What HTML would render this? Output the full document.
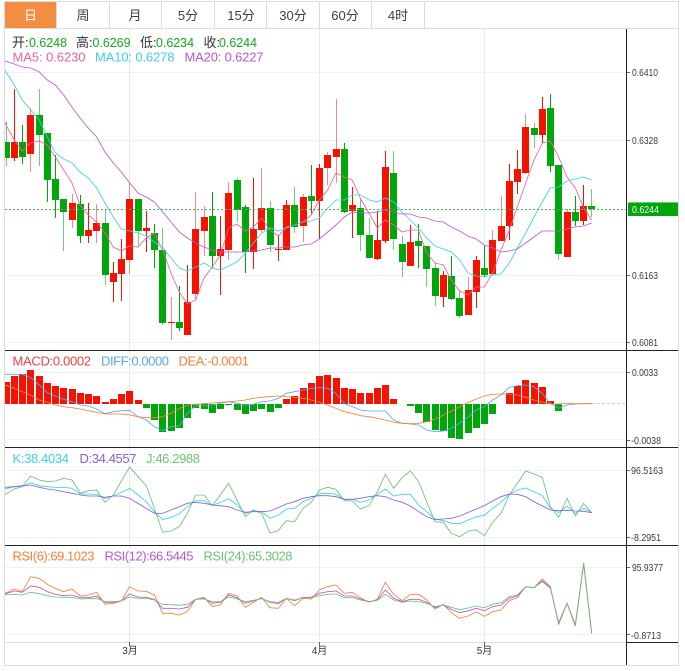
<!DOCTYPE html>
<html lang="zh"><head><meta charset="utf-8"><title>K线图</title>
<style>
html,body{margin:0;padding:0;background:#fff;width:685px;height:671px;overflow:hidden}
svg{display:block}
text{font-family:"Liberation Sans","Noto Sans CJK SC",sans-serif}
.tab{font-size:13px;fill:#3d3d3d;text-anchor:middle}
.hd{font-size:13px}
.ax{font-size:10px;fill:#3a3a3a}
.mo{font-size:10px;fill:#333;text-anchor:middle}
.c{shape-rendering:crispEdges;fill:none}
polyline{fill:none;stroke-width:.85;vector-effect:non-scaling-stroke}
.cy{stroke:#3fd0e0}.pk{stroke:#f0609a}.pu{stroke:#b45ad0}.bl{stroke:#58a8ee}.or{stroke:#f5803a}.vi{stroke:#8a5fd0}.gr{stroke:#6fc077}
</style></head><body>
<svg width="685" height="671" viewBox="0 0 685 671" xmlns="http://www.w3.org/2000/svg">
<defs><clipPath id="cl"><rect x="5" y="29" width="621" height="613"/></clipPath></defs>

<!-- grid -->
<path class="c" stroke="#eef2f5" d="M5 72.5H626M5 140.5H626M5 275.5H626M5 342.5H626M5 372.5H626M5 439.5H626M5 470.5H626M5 537.5H626M5 567.5H626M5 634.5H626"/>
<path class="c" stroke="#e4ebf1" d="M129.5 29V642M319.5 29V642M484.5 29V642"/>

<!-- tabs -->
<rect x="5" y="2" width="51" height="26" fill="#f38d42"/>
<path class="c" stroke="#dcdcdc" d="M56.5 2V28M109.5 2V28M161.5 2V28M214.5 2V28M266.5 2V28M319.5 2V28M371.5 2V28M424.5 2V28M5 28.5H678"/>
<text class="tab" x="30.5" y="20" style="fill:#fff">日</text>
<text class="tab" x="83" y="20">周</text>
<text class="tab" x="135" y="20">月</text>
<text class="tab" x="188" y="20">5分</text>
<text class="tab" x="241" y="20">15分</text>
<text class="tab" x="293" y="20">30分</text>
<text class="tab" x="345" y="20">60分</text>
<text class="tab" x="398" y="20">4时</text>

<g clip-path="url(#cl)">
<!-- wicks -->
<path class="c" stroke="#f51200" d="M14.5 89V161M88.5 203V243M113.5 262V302M121.5 239V301M146.5 211V252M187.5 265V335M220.5 216V295M253.5 178V269M278.5 235V261M286.5 200V250M319.5 164V239M352.5 187V238M377.5 211V260M385.5 151V243M410.5 225V266M443.5 271V307M476.5 256V308M509.5 164V240M517.5 150V194M542.5 97V143M583.5 185V225"/>
<path class="c" stroke="#fb8a80" d="M30.5 108V172M72.5 194V228M96.5 204V243M129.5 183V274M171.5 297V340M195.5 192V300M204.5 206V256M228.5 182V260M261.5 168V232M303.5 194V242M327.5 152V185M336.5 99V183M468.5 277V315M492.5 230V275M501.5 196V241M525.5 114V174M567.5 209V257"/>
<path class="c" stroke="#00a60a" d="M22.5 125V164M47.5 133V202M55.5 155V218M80.5 195V243M154.5 224V268M179.5 286V331M212.5 192V268M245.5 205V273M311.5 165V214M344.5 143V213M418.5 224V268M451.5 256V300M484.5 246V277M550.5 94V172M575.5 196V226"/>
<path class="c" stroke="#70cf75" d="M6.5 122V166M39.5 89V166M63.5 199V251M105.5 209V285M138.5 199V247M162.5 228V325M237.5 178V222M270.5 201V252M294.5 187V233M360.5 199V251M369.5 218V258M393.5 151V250M402.5 236V277M426.5 246V287M435.5 263V306M459.5 290V318M534.5 123V148M558.5 165V260M591.5 189V217"/>
<!-- bodies -->
<path class="c" stroke="#f51200" stroke-width="7" d="M14.5 142V158M30.5 115V154M72.5 203V220M88.5 230V236M96.5 223V231M113.5 273V282M121.5 259V274M129.5 199V260M146.5 228V231M171.5 322V323M187.5 302V335M195.5 229V294M204.5 217V231M220.5 249V256M228.5 193V250M253.5 229V252M261.5 208V230M278.5 249V250M286.5 205V250M303.5 197V226M319.5 168V201M327.5 155V168M336.5 149V157M352.5 205V211M377.5 240V259M385.5 167V241M410.5 242V266M443.5 275V297M468.5 290V315M476.5 260V292M492.5 240V274M501.5 226V241M509.5 181V226M517.5 169V182M525.5 127V173M542.5 109V135M567.5 212V257M583.5 206V221"/>
<path class="c" stroke="#00a60a" stroke-width="7" d="M6.5 142V158M22.5 142V157M39.5 115V135M47.5 133V180M55.5 179V200M63.5 199V212M80.5 204V236M105.5 223V275M138.5 199V231M154.5 233V250M162.5 250V323M179.5 322V328M212.5 216V256M237.5 180V210M245.5 207V252M270.5 208V245M294.5 205V227M311.5 196V201M344.5 149V212M360.5 208V235M369.5 235V258M393.5 173V239M402.5 244V262M418.5 241V246M426.5 246V269M435.5 268V296M451.5 276V299M459.5 298V316M484.5 268V275M534.5 128V135M550.5 108V166M558.5 165V254M575.5 212V221M591.5 206V209"/>
<!-- MA lines -->
<polyline class="pk" points="5,122 6,125 14.3,140 22.3,151 30.7,143 39.3,141 47.3,145 55.3,157 63.7,170 72,183 80,205 88.3,215 96.7,222 105,233 113.3,247 121.3,251 129.7,246 138,247 146.3,238 154.3,233 162.7,250 171,273 179.3,292 187.3,304 195.7,300 204,278 212.3,267 220.3,255 228.7,228 237,224 245.3,231 253.3,227 261.7,218 270,230 278.3,236 286.3,227 294.7,225 303,222 311.3,215 319.3,200 327.7,190 336,173 344.3,177 352.3,180 360.7,199 369,213 377.3,228 385.3,220 393.7,225 402,232 410.3,230 418.3,230 426.7,253 435,263 443.3,265 451.3,280 459.7,291 468,295 476.3,287 484.3,287 492.7,273 501,250 509.3,230 517.3,207 525.7,183 534,160 542.3,143 550.3,141 558.7,157 567,177 575.3,188 583.3,207 591.7,220"/>
<polyline class="cy" points="5,70 6,72 14.3,85 22.3,100 30.7,110 39.3,120 47.3,137 55.3,153 63.7,159 72,163 80,172 88.3,178 96.7,188 105,203 113.3,217 121.3,229 129.7,231 138,233 146.3,236 154.3,242 162.7,248 171,258 179.3,268 187.3,271 195.7,267 204,263 212.3,268 220.3,270 228.7,266 237,262 245.3,253 253.3,243 261.7,233 270,228 278.3,231 286.3,228 294.7,225 303,222 311.3,221 319.3,218 327.7,208 336,200 344.3,200 352.3,195 360.7,195 369,200 377.3,202 385.3,198 393.7,202 402,212 410.3,220 418.3,228 426.7,238 435,246 443.3,249 451.3,252 459.7,260 468,273 476.3,276 484.3,277 492.7,275 501,274 509.3,263 517.3,248 525.7,233 534,217 542.3,202 550.3,188 558.7,187 567,181 575.3,179 583.3,177 591.7,180"/>
<polyline class="pu" points="5,61 14.3,64 22.3,67 30.7,68 39.3,72 47.3,80 55.3,85 63.7,95 72,107 80,118 88.3,128 96.7,137 105,152 113.3,163 121.3,172 129.7,183 138,193 146.3,197 154.3,202 162.7,212 171,222 179.3,232 187.3,238 195.7,243 204,247 212.3,250 220.3,252 228.7,252 237,252 245.3,252 253.3,251 261.7,250 270,248 278.3,248 286.3,247 294.7,247 303,245 311.3,244 319.3,239 327.7,232 336,225 344.3,217 352.3,212 360.7,213 369,213 377.3,212 385.3,210 393.7,212 402,214 410.3,214 418.3,217 426.7,218 435,221 443.3,222 451.3,227 459.7,231 468,236 476.3,239 484.3,245 492.7,248 501,252 509.3,251 517.3,249 525.7,243 534,237 542.3,231 550.3,231 558.7,231 567,229 575.3,227 583.3,226 591.7,223"/>

<!-- MACD -->
<path class="c" stroke="#f51200" stroke-width="7" d="M6.5 382V404M14.5 376V404M22.5 374V404M30.5 370V404M39.5 376V404M47.5 383V404M55.5 386V404M63.5 388V404M72.5 389V404M80.5 393V404M88.5 394V404M96.5 396V404M105.5 402V404M113.5 399V404M121.5 394V404M129.5 391V404M138.5 400V404M286.5 399V404M294.5 396V404M303.5 388V404M311.5 383V404M319.5 376V404M327.5 375V404M336.5 378V404M344.5 388V404M352.5 389V404M360.5 393V404M369.5 393V404M377.5 388V404M385.5 385V404M393.5 399V404M509.5 393V404M517.5 386V404M525.5 380V404M534.5 383V404M542.5 387V404M550.5 401V404"/>
<path class="c" stroke="#00a60a" stroke-width="7" d="M146.5 404V408M154.5 404V420M162.5 404V432M171.5 404V431M179.5 404V428M187.5 404V418M195.5 404V408M204.5 404V409M212.5 404V413M220.5 404V409M228.5 404V405M237.5 404V410M245.5 404V414M253.5 404V411M261.5 404V409M270.5 404V412M278.5 404V408M410.5 404V406M418.5 404V413M426.5 404V422M435.5 404V430M443.5 404V431M451.5 404V438M459.5 404V439M468.5 404V433M476.5 404V428M484.5 404V424M492.5 404V414M558.5 404V411"/>
<path d="M592 403.5H625" stroke="#9fdfe8" stroke-dasharray="3 2" fill="none"/>
<g transform="translate(0,345) scale(.33333)">
<polyline class="bl" points="15,88 43,88 67,88 92,98 118,120 142,143 166,153 191,163 216,170 241,180 265,183 290,192 315,206 340,200 364,197 389,196 414,215 439,225 463,245 488,257 513,245 538,243 562,205 587,182 612,183 637,180 661,175 686,170 711,175 736,180 760,178 785,170 810,168 835,160 859,145 884,140 909,135 934,130 958,128 983,130 1008,145"/>
<polyline class="or" points="15,120 43,130 67,140 92,150 118,165 142,172 166,180 191,185 216,188 241,192 265,197 290,202 315,207 340,207 364,207 389,210 414,215 439,218 463,218 488,215 513,205 538,190 562,180 587,178 612,176 637,174 661,172 686,170 711,168 736,165 760,160 785,157 810,155 835,153 859,155 884,157 909,160 934,165 958,172 983,180 1008,190"/>
</g>
<g transform="translate(343,345) scale(.33333)">
<polyline class="bl" points="-21,145 4,176 28,185 52,195 78,198 103,198 127,198 152,225 178,235 202,237 227,240 251,255 276,260 301,258 325,250 350,235 376,215 400,195 424,185 449,165 474,150 499,127 523,122 548,120 573,125 598,145 622,175 647,190 672,180 697,177 722,176 746,176"/>
<polyline class="or" points="-21,190 4,200 28,205 52,212 78,215 103,220 127,225 152,232 178,235 202,236 227,235 251,230 276,222 301,210 325,198 350,185 376,172 400,162 424,153 449,148 474,147 499,147 523,150 548,157 573,165 598,172 622,177 647,177 672,176 697,176 722,176 746,176"/>
</g>

<!-- KDJ -->
<g transform="translate(0,445) scale(.33333)">
<polyline class="gr" points="15,148 43,132 67,125 92,93 118,105 142,110 166,108 191,100 216,105 241,145 265,137 290,135 315,172 340,150 364,108 389,66 414,95 439,122 463,190 488,262 513,258 538,245 562,205 587,150 612,150 637,182 661,150 686,115 711,165 736,215 760,195 785,205 810,264 835,257 859,227 884,230 909,190 934,172 958,135 983,127 1008,133"/>
<polyline class="cy" points="15,132 43,125 67,125 92,113 118,122 142,125 166,127 191,127 216,130 241,147 265,147 290,148 315,160 340,153 364,142 389,130 414,150 439,170 463,200 488,224 513,217 538,206 562,185 587,167 612,167 637,182 661,172 686,161 711,180 736,205 760,197 785,200 810,220 835,210 859,192 884,190 909,170 934,160 958,146 983,145 1008,148"/>
<polyline class="vi" points="15,127 43,125 67,122 92,120 118,127 142,132 166,135 191,140 216,145 241,150 265,153 290,153 315,157 340,153 364,153 389,160 414,175 439,190 463,205 488,205 513,195 538,185 562,175 587,172 612,175 637,180 661,182 686,185 711,195 736,202 760,200 785,200 810,198 835,188 859,177 884,170 909,160 934,155 958,152 983,152 1008,155"/>
</g>
<g transform="translate(343,445) scale(.33333)">
<polyline class="gr" points="-21,133 4,167 28,168 52,192 78,182 103,140 127,88 152,130 178,97 202,78 227,110 251,170 276,230 301,232 325,265 350,275 376,258 400,255 424,272 449,232 474,205 499,150 523,115 548,78 573,87 598,97 622,185 647,217 672,160 697,213 722,175 746,203"/>
<polyline class="cy" points="-21,148 4,163 28,163 52,172 78,165 103,148 127,132 152,153 178,148 202,148 227,180 251,200 276,222 301,227 325,235 350,236 376,225 400,215 424,211 449,190 474,172 499,148 523,135 548,129 573,140 598,152 622,190 647,203 672,183 697,205 722,190 746,203"/>
<polyline class="vi" points="-21,155 4,163 28,163 52,160 78,155 103,152 127,155 152,165 178,172 202,183 227,200 251,215 276,224 301,222 325,220 350,213 376,202 400,192 424,182 449,168 474,155 499,147 523,148 548,155 573,170 598,183 622,195 647,197 672,196 697,198 722,199 746,203"/>
</g>

<!-- RSI -->
<g transform="translate(0,545) scale(.33333)">
<polyline class="or" points="15,145 43,132 67,140 92,95 118,100 142,118 166,130 191,140 216,132 241,153 265,150 290,142 315,178 340,175 364,168 389,125 414,138 439,139 463,150 488,205 513,205 538,210 562,200 587,163 612,157 637,185 661,180 686,145 711,153 736,187 760,172 785,157 810,188 835,190 859,160 884,182 909,160 934,162 958,135 983,125 1008,120"/>
<polyline class="pu" points="15,147 43,138 67,142 92,123 118,127 142,140 166,148 191,152 216,150 241,158 265,158 290,153 315,172 340,172 364,168 389,147 414,156 439,157 463,163 488,190 513,190 538,192 562,187 587,163 612,160 637,175 661,172 686,150 711,158 736,175 760,168 785,160 810,172 835,176 859,160 884,167 909,157 934,157 958,145 983,140 1008,138"/>
<polyline class="gr" points="15,150 43,148 67,150 92,142 118,146 142,152 166,156 191,157 216,157 241,162 265,161 290,160 315,170 340,170 364,168 389,156 414,160 439,160 463,165 488,178 513,179 538,181 562,178 587,163 612,162 637,170 661,170 686,156 711,162 736,170 760,166 785,161 810,170 835,172 859,160 884,165 909,158 934,158 958,152 983,148 1008,147"/>
</g>
<g transform="translate(343,545) scale(.33333)">
<polyline class="or" points="-21,120 4,145 28,142 52,158 78,172 103,163 127,112 152,148 178,167 202,148 227,148 251,165 276,192 301,178 325,203 350,220 376,213 400,200 424,214 449,200 474,195 499,167 523,158 548,125 573,128 598,102 622,125 647,238 672,175 697,243 722,55 746,265"/>
<polyline class="pu" points="-21,138 4,153 28,153 52,162 78,170 103,165 127,135 152,160 178,170 202,163 227,163 251,172 276,188 301,180 325,193 350,203 376,197 400,190 424,197 449,185 474,180 499,160 523,153 548,125 573,128 598,107 622,127 647,235 672,175 697,240 722,55 746,265"/>
<polyline class="gr" points="-21,147 4,158 28,158 52,165 78,170 103,166 127,148 152,165 178,172 202,168 227,170 251,175 276,185 301,180 325,187 350,194 376,189 400,183 424,188 449,178 474,173 499,155 523,150 548,125 573,128 598,110 622,130 647,232 672,175 697,238 722,55 746,265"/>
</g>
</g>

<!-- price line -->
<path d="M5 209.5H627" stroke="#4cb856" stroke-dasharray="2 2" fill="none" shape-rendering="crispEdges"/>

<!-- frame & axes -->
<path class="c" stroke="#dcdcdc" d="M4.5 1.5H678.5V665.5H4.5ZM5 642.5H626"/>
<path class="c" stroke="#222" d="M626.5 29V665M5 350.5H678M5 447.5H678M5 545.5H678M626 642.5H678"/>
<path class="c" stroke="#666" d="M627 72.5H630M627 140.5H630M627 275.5H630M627 342.5H630M627 372.5H630M627 440.5H630M627 470.5H630M627 537.5H630M627 567.5H630M627 634.5H630M129.5 642V646M319.5 642V646M484.5 642V646"/>

<!-- price box -->
<rect x="628" y="202" width="50" height="14" fill="#00a60a"/>
<rect x="628" y="202" width="50" height="1" fill="#6fcf75"/>
<text x="632" y="213" font-size="10" fill="#fff" textLength="27" lengthAdjust="spacingAndGlyphs">0.6244</text>

<!-- axis labels -->
<text class="ax" x="632" y="76" textLength="26" lengthAdjust="spacingAndGlyphs">0.6410</text>
<text class="ax" x="632" y="144" textLength="26" lengthAdjust="spacingAndGlyphs">0.6328</text>
<text class="ax" x="632" y="279" textLength="26" lengthAdjust="spacingAndGlyphs">0.6163</text>
<text class="ax" x="632" y="346" textLength="26" lengthAdjust="spacingAndGlyphs">0.6081</text>
<text class="ax" x="632" y="376" textLength="26" lengthAdjust="spacingAndGlyphs">0.0033</text>
<text class="ax" x="631" y="444" textLength="30" lengthAdjust="spacingAndGlyphs">-0.0038</text>
<text class="ax" x="631" y="474" textLength="32" lengthAdjust="spacingAndGlyphs">96.5163</text>
<text class="ax" x="631" y="541" textLength="30" lengthAdjust="spacingAndGlyphs">-8.2951</text>
<text class="ax" x="632" y="571" textLength="31" lengthAdjust="spacingAndGlyphs">95.9377</text>
<text class="ax" x="631" y="639" textLength="30" lengthAdjust="spacingAndGlyphs">-0.8713</text>

<text class="mo" x="130" y="654">3月</text>
<text class="mo" x="319.5" y="654">4月</text>
<text class="mo" x="484.5" y="654">5月</text>

<!-- header -->
<text class="hd" x="12" y="47" fill="#333">开:</text><text class="hd" x="29" y="47" fill="#12a81c" textLength="38" lengthAdjust="spacingAndGlyphs">0.6248</text>
<text class="hd" x="76" y="47" fill="#333">高:</text><text class="hd" x="92.5" y="47" fill="#12a81c" textLength="38" lengthAdjust="spacingAndGlyphs">0.6269</text>
<text class="hd" x="140" y="47" fill="#333">低:</text><text class="hd" x="156" y="47" fill="#12a81c" textLength="38" lengthAdjust="spacingAndGlyphs">0.6234</text>
<text class="hd" x="203.5" y="47" fill="#333">收:</text><text class="hd" x="219" y="47" fill="#12a81c" textLength="38" lengthAdjust="spacingAndGlyphs">0.6244</text>

<text class="hd" x="12.5" y="61.5" fill="#f0609a" textLength="73" lengthAdjust="spacing">MA5: 0.6230</text>
<text class="hd" x="95" y="61.5" fill="#3fd0e0" textLength="79.5" lengthAdjust="spacing">MA10: 0.6278</text>
<text class="hd" x="184.5" y="61.5" fill="#b45ad0" textLength="79" lengthAdjust="spacing">MA20: 0.6227</text>

<text class="hd" x="12.5" y="365.5" fill="#f04040" textLength="78.5" lengthAdjust="spacing">MACD:0.0002</text>
<text class="hd" x="101" y="365.5" fill="#58a8ee" textLength="68" lengthAdjust="spacing">DIFF:0.0000</text>
<text class="hd" x="178.5" y="365.5" fill="#f5803a" textLength="70.5" lengthAdjust="spacing">DEA:-0.0001</text>

<text class="hd" x="12.5" y="463" fill="#3fd0e0" textLength="56.5" lengthAdjust="spacing">K:38.4034</text>
<text class="hd" x="79.5" y="463" fill="#8a5fd0" textLength="57" lengthAdjust="spacing">D:34.4557</text>
<text class="hd" x="146" y="463" fill="#6fc077" textLength="54" lengthAdjust="spacing">J:46.2988</text>

<text class="hd" x="12.5" y="560.5" fill="#f5803a" textLength="82" lengthAdjust="spacing">RSI(6):69.1023</text>
<text class="hd" x="104.5" y="560.5" fill="#b45ad0" textLength="89" lengthAdjust="spacing">RSI(12):66.5445</text>
<text class="hd" x="203.5" y="560.5" fill="#6fc077" textLength="89" lengthAdjust="spacing">RSI(24):65.3028</text>
</svg>
</body></html>
